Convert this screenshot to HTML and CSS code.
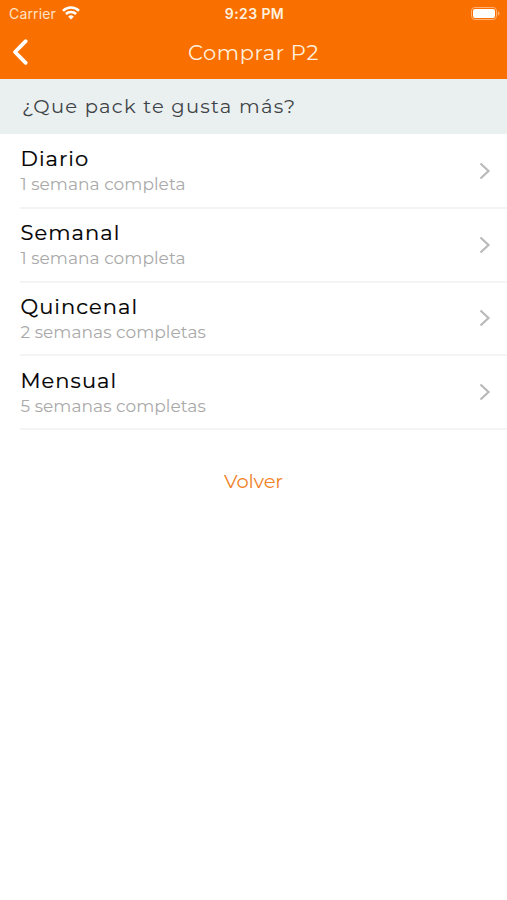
FILE: index.html
```html
<!DOCTYPE html>
<html lang="es">
<head>
  <meta charset="UTF-8" />
  <meta name="viewport" content="width=device-width, initial-scale=1.0" />
  <title>Comprar P2</title>
  <link rel="stylesheet" href="styles.css">
</head>
<body>
  <header class="header">
    <div class="status-bar">
      <div class="carrier">
        <span class="carrier-name">Carrier</span>
        <svg class="wifi" viewBox="0 0 18 14" width="18" height="14">
          <path d="M1 4.8a11.3 11.3 0 0 1 16 0" />
          <path d="M3.9 8a7.2 7.2 0 0 1 10.2 0" />
          <path class="wifi-dot" d="M9 13.6 6.2 10.7a4 4 0 0 1 5.6 0z" />
        </svg>
      </div>
      <span class="time">9:23 PM</span>
      <svg class="battery" viewBox="0 0 30 14" width="30" height="14">
        <rect class="battery-case" x="1.5" y=".5" width="25" height="12" rx="3.4" />
        <rect class="battery-level" x="3" y="2" width="22" height="9" rx="2" />
        <path class="battery-tip" d="M27.9 4.3c2.2.8 2.2 3.6 0 4.4z" />
      </svg>
    </div>
    <nav class="nav-bar">
      <a class="back" href="#" aria-label="Volver">
        <svg viewBox="0 0 18 28" width="18" height="28"><path d="M14.7 3.2 4 14l10.7 10.8" /></svg>
      </a>
      <h1 class="title">Comprar P2</h1>
    </nav>
  </header>

  <h2 class="question">¿Que pack te gusta más?</h2>

  <ul class="packs">
    <li class="pack">
      <div class="pack-text">
        <p class="name">Diario</p>
        <p class="detail">1 semana completa</p>
      </div>
      <svg class="arrow" viewBox="0 0 12 18" width="12" height="18"><path d="M1.5 1.5 9.5 9l-8 7.5" /></svg>
    </li>
    <li class="pack">
      <div class="pack-text">
        <p class="name">Semanal</p>
        <p class="detail">1 semana completa</p>
      </div>
      <svg class="arrow" viewBox="0 0 12 18" width="12" height="18"><path d="M1.5 1.5 9.5 9l-8 7.5" /></svg>
    </li>
    <li class="pack">
      <div class="pack-text">
        <p class="name">Quincenal</p>
        <p class="detail">2 semanas completas</p>
      </div>
      <svg class="arrow" viewBox="0 0 12 18" width="12" height="18"><path d="M1.5 1.5 9.5 9l-8 7.5" /></svg>
    </li>
    <li class="pack">
      <div class="pack-text">
        <p class="name">Mensual</p>
        <p class="detail">5 semanas completas</p>
      </div>
      <svg class="arrow" viewBox="0 0 12 18" width="12" height="18"><path d="M1.5 1.5 9.5 9l-8 7.5" /></svg>
    </li>
  </ul>

  <a class="volver" href="#">Volver</a>
</body>
</html>
```
FILE: styles.css
```css
:root {
  --orange: #fa7000;
  --line: #f4f4f5;
}
* { margin: 0; padding: 0; box-sizing: border-box; }

body {
  min-height: 100vh;
  background: #fff;
  font-family: Montserrat, Inter, sans-serif;
}
a { text-decoration: none; }
svg { display: block; fill: none; }

/* header */
.header {
  height: 79px;
  background: var(--orange);
  color: #fff0df;
}
.status-bar {
  display: grid;
  grid-template-columns: 1fr auto 1fr;
  align-items: center;
  height: 27px;
  padding: 0 7px 0 9px;
  font-family: Inter, sans-serif;
}
.carrier { display: flex; align-items: center; gap: 6px; }
.carrier-name { font-size: 14px; letter-spacing: .15px; color: #ffe2c4; }
.wifi { margin-bottom: 2px; stroke: #fff; stroke-width: 2.5; }
.wifi-dot { fill: #fff; stroke: none; }
.time { font-size: 14px; font-weight: 600; letter-spacing: .4px; }
.battery { justify-self: end; }
.battery-case { stroke: #ffb273; stroke-width: 1; }
.battery-level { fill: #fff; }
.battery-tip { fill: #ffb06a; }

.nav-bar {
  display: grid;
  grid-template-columns: 1fr auto 1fr;
  align-items: center;
  height: 50px;
  padding: 0 11px;
}
.back svg { stroke: #fff; stroke-width: 3.8; stroke-linecap: round; stroke-linejoin: round; }
.title { font-size: 21px; font-weight: 400; letter-spacing: .6px; }

.question {
  height: 55px;
  padding: 0 22px;
  background: #eaeff0;
  color: #3e4347;
  font-size: 19.5px;
  font-weight: 400;
  line-height: 54px;
  letter-spacing: 1.25px;
}

/* pack list */
.packs { list-style: none; padding: 1px 0 0 20px; }
.pack {
  display: flex;
  align-items: center;
  justify-content: space-between;
  height: 73.8px;
  padding-right: 16px;
  border-bottom: 2px solid var(--line);
}
.pack-text { padding: 1.6px 0 0 .5px; }
.name {
  font-size: 21px;
  line-height: 26px;
  letter-spacing: 1.05px;
  color: #000;
  -webkit-text-stroke: .2px #000;
}
.detail {
  font-size: 17px;
  line-height: 25px;
  letter-spacing: .05px;
  color: #a9a9a9;
}
.arrow { stroke: #b9b9b9; stroke-width: 2.2; }

.volver {
  display: block;
  width: fit-content;
  margin: 38px auto 0;
  font-size: 19.5px;
  line-height: 26px;
  letter-spacing: -.15px;
  color: #f08228;
}
```
